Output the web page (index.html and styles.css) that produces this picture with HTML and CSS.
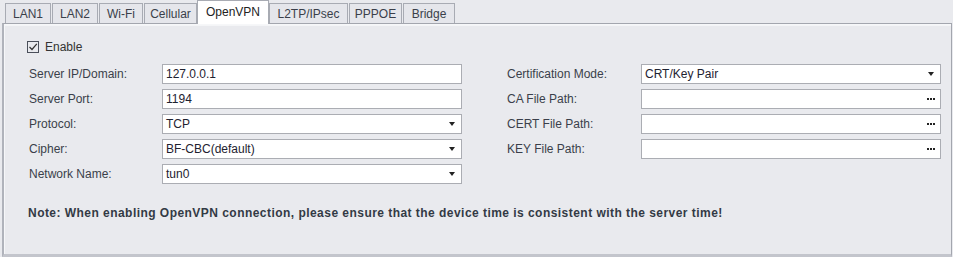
FILE: index.html
```html
<!DOCTYPE html>
<html>
<head>
<meta charset="utf-8">
<link rel="stylesheet" href="styles.css">
</head>
<body>
<div class="tabs">
  <div class="tab w-lan1">LAN1</div>
  <div class="tab w-lan2">LAN2</div>
  <div class="tab w-wifi">Wi-Fi</div>
  <div class="tab w-cell">Cellular</div>
  <div class="tab active w-ovpn">OpenVPN</div>
  <div class="tab w-l2tp">L2TP/IPsec</div>
  <div class="tab w-pppoe">PPPOE</div>
  <div class="tab w-bridge">Bridge</div>
</div>
<div class="panel">
  <div class="enable">
    <span class="check"><svg width="10" height="10" viewBox="0 0 10 10"><path d="M1.5 5 L4 7.5 L8.8 1.8" fill="none" stroke="#333" stroke-width="1.2"/></svg></span>
    <span>Enable</span>
  </div>
  <div class="form">
    <div class="col">
      <div class="row"><label>Server IP/Domain:</label><div class="field">127.0.0.1</div></div>
      <div class="row"><label>Server Port:</label><div class="field">1194</div></div>
      <div class="row"><label>Protocol:</label><div class="field select">TCP<span class="arrow"></span></div></div>
      <div class="row"><label>Cipher:</label><div class="field select">BF-CBC(default)<span class="arrow"></span></div></div>
      <div class="row"><label>Network Name:</label><div class="field select">tun0<span class="arrow"></span></div></div>
    </div>
    <div class="col right">
      <div class="row"><label>Certification Mode:</label><div class="field select">CRT/Key Pair<span class="arrow"></span></div></div>
      <div class="row"><label>CA File Path:</label><div class="field select"><span></span><span class="dots"><i></i><i></i><i></i></span></div></div>
      <div class="row"><label>CERT File Path:</label><div class="field select"><span></span><span class="dots"><i></i><i></i><i></i></span></div></div>
      <div class="row"><label>KEY File Path:</label><div class="field select"><span></span><span class="dots"><i></i><i></i><i></i></span></div></div>
    </div>
  </div>
  <div class="note">Note: When enabling OpenVPN connection, please ensure that the device time is consistent with the server time!</div>
</div>
</body>
</html>
```
FILE: styles.css
```css
html, body {
  margin: 0;
  padding: 0;
  background: #e9eaee;
  font-family: "Liberation Sans", Arial, sans-serif;
  font-size: 12px;
  color: #3a3f4a;
}
.tabs {
  display: flex;
  height: 23px;
  padding-left: 5px;
  box-sizing: border-box;
}
.tab {
  margin-top: 3px;
  height: 20px;
  box-sizing: border-box;
  border: 1px solid #a8abb3;
  border-bottom: none;
  background: #e5e6eb;
  display: flex;
  align-items: center;
  justify-content: center;
  color: #3a3f4a;
  margin-right: 1px;
}
.tab.active {
  margin-top: 0;
  height: 24px;
  margin-bottom: -1px;
  background: #ffffff;
  position: relative;
  z-index: 2;
  color: #222;
  margin-right: 0;
  padding-bottom: 1px;
}
.w-lan1 { width: 46px; }
.w-lan2 { width: 46px; }
.w-wifi { width: 44px; }
.tab.w-cell { width: 53px; margin-right: 0; }
.w-ovpn { width: 72px; }
.w-l2tp { width: 79px; }
.w-pppoe { width: 53px; }
.w-bridge { width: 52px; }
.panel {
  margin-left: 2px;
  width: 950px;
  height: 234px;
  box-sizing: border-box;
  border: 1px solid #a3a6ae;
  border-bottom: 3px solid #c3c5cc;
  border-left: 2px solid #b0b3bb;
  box-shadow: inset 1px 1px 0 #f6f7f9, inset 0 1px 0 #e9eaee, inset 0 2px 0 #f4f5f7;
  position: relative;
  z-index: 1;
  padding: 16px 0 0 23px;
}
.enable {
  display: flex;
  align-items: center;
  height: 14px;
  color: #333;
}
.check {
  width: 12px;
  height: 12px;
  box-sizing: border-box;
  border: 1px solid #4a4f5a;
  display: flex;
  align-items: center;
  justify-content: center;
  margin-right: 6px;
}
.form {
  display: flex;
  margin-top: 10px;
  margin-left: 2px;
}
.col {
  display: flex;
  flex-direction: column;
  gap: 5px;
}
.col.right {
  margin-left: 45px;
}
.row {
  display: flex;
  align-items: center;
  height: 20px;
}
.row label {
  width: 133px;
  color: #3a3f4a;
}
.right .row label {
  width: 134px;
}
.field {
  width: 300px;
  height: 20px;
  box-sizing: border-box;
  border: 1px solid #abadb3;
  background: #fff;
  display: flex;
  align-items: center;
  padding-left: 3px;
  color: #1e2230;
}
.field.select {
  justify-content: space-between;
  padding-right: 6px;
}
.arrow {
  width: 0;
  height: 0;
  border-left: 3.5px solid transparent;
  border-right: 3.5px solid transparent;
  border-top: 4px solid #222;
}
.dots {
  display: flex;
  gap: 1px;
  margin-right: -1px;
}
.dots i {
  width: 2px;
  height: 2px;
  background: #222;
}
.note {
  margin-top: 22px;
  margin-left: 1px;
  font-weight: bold;
  letter-spacing: 0.46px;
  color: #333a45;
  line-height: 14px;
}
```
